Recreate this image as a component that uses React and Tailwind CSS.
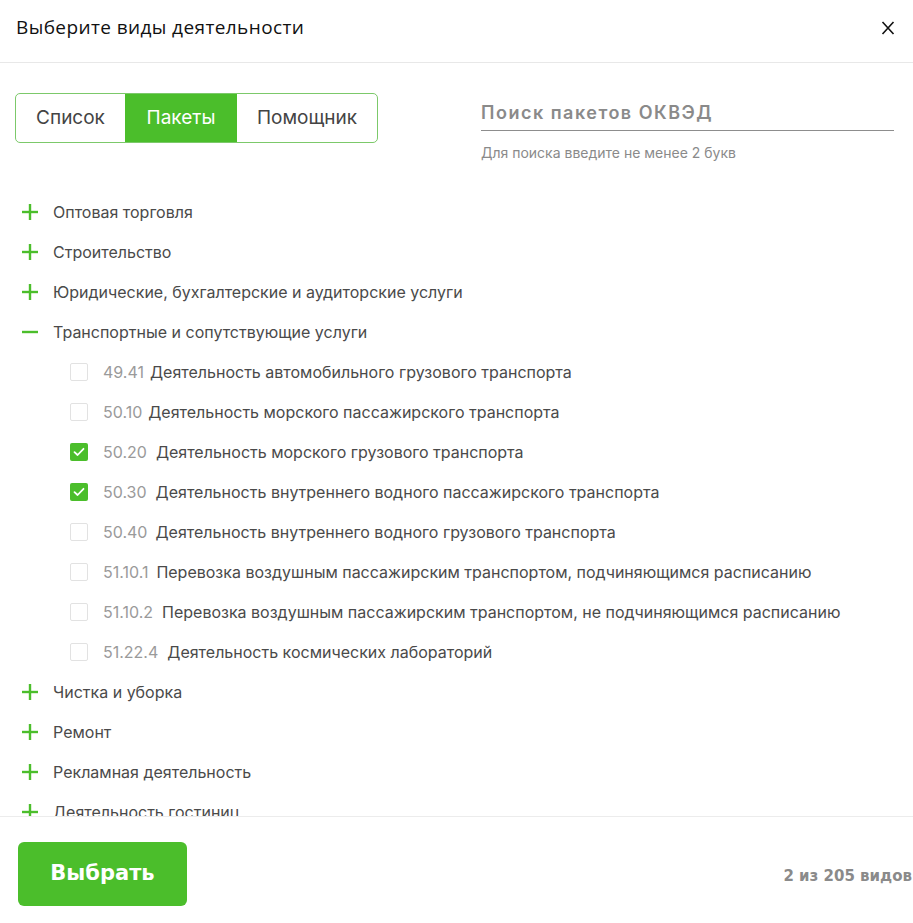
import React from "react";

const G = "#4bbe2b";

const groupsTop = [
  "Оптовая торговля",
  "Строительство",
  "Юридические, бухгалтерские и аудиторские услуги",
];
const children = [
  ["49.41", "Деятельность автомобильного грузового транспорта", false, 6],
  ["50.10", "Деятельность морского пассажирского транспорта", false, 6],
  ["50.20", "Деятельность морского грузового транспорта", true, 9],
  ["50.30", "Деятельность внутреннего водного пассажирского транспорта", true, 9],
  ["50.40", "Деятельность внутреннего водного грузового транспорта", false, 8],
  ["51.10.1", "Перевозка воздушным пассажирским транспортом, подчиняющимся расписанию", false, 8],
  ["51.10.2", "Перевозка воздушным пассажирским транспортом, не подчиняющимся расписанию", false, 9],
  ["51.22.4", "Деятельность космических лабораторий", false, 9],
];
const groupsBottom = ["Чистка и уборка", "Ремонт", "Рекламная деятельность", "Деятельность гостиниц", "Туризм"];

function Plus({ minus }) {
  return (
    <svg width="16" height="16" viewBox="0 0 16 16" className="shrink-0">
      <path d="M0 8H16" stroke={G} strokeWidth="2.4" />
      {!minus && <path d="M8 0V16" stroke={G} strokeWidth="2.4" />}
    </svg>
  );
}

function Group({ label, minus }) {
  return (
    <div className="h-10 flex items-center pl-[22px] gap-[15px] text-[16px] text-[#4a4a4a]">
      <Plus minus={minus} />
      <span>{label}</span>
    </div>
  );
}

function Child({ code, label, checked, gap }) {
  return (
    <div className="h-10 flex items-center pl-[70px] text-[16px]">
      {checked ? (
        <div className="w-[18px] h-[18px] rounded-[2px] bg-[#4bbe2b] flex items-center justify-center shrink-0">
          <svg width="12" height="10" viewBox="0 0 12 10">
            <path d="M1.5 5.2L4.6 8L10.5 1.8" stroke="white" strokeWidth="1.8" fill="none" strokeLinecap="round" strokeLinejoin="round" />
          </svg>
        </div>
      ) : (
        <div className="w-[18px] h-[18px] rounded-[2px] border border-[#e2e2e2] bg-white shrink-0" />
      )}
      <span className="ml-[15px] text-[#9a9a9a]">{code}</span>
      <span className={gap === 9 ? "ml-[9px] text-[#4a4a4a]" : gap === 8 ? "ml-[8px] text-[#4a4a4a]" : "ml-[6px] text-[#4a4a4a]"}>{label}</span>
    </div>
  );
}

export default function App() {
  return (
    <div className="w-[913px] h-[923px] bg-white flex flex-col overflow-hidden" style={{ fontFamily: "Inter, 'Noto Sans', sans-serif" }}>
      <div className="h-[63px] shrink-0 border-b border-[#e8e8e8] flex items-start justify-between pl-4 pr-[18px] pt-[13px]">
        <span className="text-[19px] leading-[28px] font-medium text-[#111] tracking-[0.4px]" style={{ fontFamily: "'Open Sans', sans-serif" }}>Выберите виды деятельности</span>
        <svg width="14" height="14" viewBox="0 0 14 14" className="mt-[8px]">
          <path d="M1.5 1L12.5 13M12.5 1L1.5 13" stroke="#111" strokeWidth="1.6" />
        </svg>
      </div>

      <div className="flex items-start pt-[30px] shrink-0 h-[80px]">
        <div className="ml-[15px] flex h-[50px] border border-[#7cc96a] rounded-[5px] overflow-hidden text-[19px] text-[#444]">
          <div className="w-[109px] flex items-center justify-center">Список</div>
          <div className="w-[112px] flex items-center justify-center bg-[#4bbe2b] text-white">Пакеты</div>
          <div className="w-[140px] flex items-center justify-center">Помощник</div>
        </div>
        <div className="ml-[103px] w-[413px] flex flex-col">
          <div className="h-[38px] border-b border-[#8d8d8d] flex items-center text-[18px] font-semibold text-[#8a8a8a] tracking-[1.5px] pt-[1px]">
            Поиск пакетов ОКВЭД
          </div>
          <div className="mt-[11px] text-[14px] text-[#8a8a8a]">Для поиска введите не менее 2 букв</div>
        </div>
      </div>

      <div className="mt-[49px] flex-1 overflow-hidden">
        {groupsTop.map((g) => (
          <Group key={g} label={g} />
        ))}
        <Group label="Транспортные и сопутствующие услуги" minus />
        {children.map(([c, l, ch, gp]) => (
          <Child key={c} code={c} label={l} checked={ch} gap={gp} />
        ))}
        {groupsBottom.map((g) => (
          <Group key={g} label={g} />
        ))}
      </div>

      <div className="h-[107px] shrink-0 border-t border-[#ececec] flex items-start justify-between pt-[25px] pl-[18px] pr-[1px]">
        <div className="w-[169px] h-[64px] rounded-[6px] bg-[#4bbe2b] flex items-center justify-center text-white text-[21px] font-bold" style={{ fontFamily: "'DejaVu Sans', sans-serif" }}>
          Выбрать
        </div>
        <div className="mt-[23px] text-[15px] font-bold text-[#8a8a8a]" style={{ fontFamily: "'DejaVu Sans', sans-serif" }}>
          2 из 205 видов
        </div>
      </div>
    </div>
  );
}
